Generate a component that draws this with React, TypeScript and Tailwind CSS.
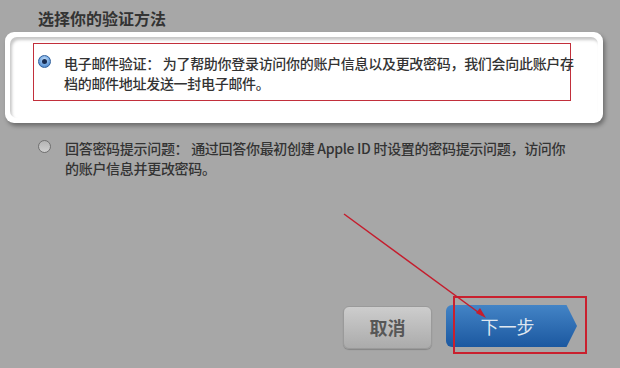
import React from 'react';

const SelectedRadio: React.FC = () => (
  <span className="mt-[2px] flex h-[13px] w-[13px] shrink-0 items-center justify-center rounded-full border border-[#2f5f9c] bg-[radial-gradient(circle_at_50%_35%,#cfe3f8_0%,#7fb0e6_45%,#3a76c0_100%)]">
    <span className="h-[5px] w-[5px] rounded-full bg-[#172c52]" />
  </span>
);

const EmptyRadio: React.FC = () => (
  <span className="mt-[2px] h-[13px] w-[13px] shrink-0 rounded-full border-[1.5px] border-[#707070] bg-gradient-to-b from-[#b4b4b4] to-[#cfcfcf]" />
);

const App: React.FC = () => {
  return (
    <div
      className="relative flex h-[368px] w-[620px] flex-col overflow-hidden bg-[#a7a7a7] text-[#2f2f2f]"
      style={{ fontFamily: '"Noto Sans CJK SC", "Liberation Sans", sans-serif' }}
    >
      <h1 className="pl-[38px] pt-[8px] text-[16px] font-bold leading-[20px] text-[#333]">
        选择你的验证方法
      </h1>

      {/* highlighted option */}
      <div className="ml-[5px] mt-[4px] h-[91px] w-[598px] rounded-[9px] bg-white p-[5px] shadow-[2px_3px_4px_rgba(0,0,0,0.35)]">
        <div className="h-full rounded-[7px] pl-[23px] pt-[6px] shadow-[inset_2px_3px_3px_rgba(0,0,0,0.22)]">
          <div className="flex h-[58px] w-[538px] items-start border-[1.5px] border-[#c22f3b] pl-[4px] pt-[9px]">
            <SelectedRadio />
            <p className="ml-[13px] whitespace-nowrap text-[14px] font-medium leading-[20px] tracking-[-0.3px] text-[#333]">
              电子邮件验证： 为了帮助你登录访问你的账户信息以及更改密码，我们会向此账户存
              <br />
              档的邮件地址发送一封电子邮件。
            </p>
          </div>
        </div>
      </div>

      <div className="flex items-start pl-[38px] pt-[15px]">
        <EmptyRadio />
        <p className="ml-[14px] whitespace-nowrap text-[14px] font-medium leading-[20px] tracking-[-0.3px] text-[#333]">
          回答密码提示问题： 通过回答你最初创建 Apple ID 时设置的密码提示问题，访问你
          <br />
          的账户信息并更改密码。
        </p>
      </div>

      <div className="mt-auto flex items-start justify-end gap-[14px] pb-[19px] pr-[43px]">
        <button className="mt-[1px] flex h-[43px] w-[89px] items-center justify-center rounded-[6px] border border-[#9a9a9a] bg-gradient-to-b from-[#cdcdcd] to-[#ababab] text-[18px] font-bold text-[#575757] shadow-[0_1px_1px_rgba(0,0,0,0.2)]">
          取消
        </button>
        <button className="flex h-[42px] w-[131px] items-center justify-center rounded-[6px] bg-gradient-to-b from-[#4384c6] to-[#1b58a0] pr-[8px] text-[18px] text-[#dfe7f0] [clip-path:polygon(0_0,92%_0,100%_50%,92%_100%,0_100%)]">
          下一步
        </button>
      </div>

      {/* annotations */}
      <div className="absolute left-[453px] top-[296px] h-[58px] w-[134px] border-2 border-[#c9202e]" />
      <svg className="pointer-events-none absolute left-0 top-0" width="620" height="368">
        <line x1="344" y1="214" x2="482" y2="315" stroke="#c51d2d" strokeWidth="1.5" />
        <polygon points="486,318 476,313 480,308" fill="#c51d2d" />
      </svg>
    </div>
  );
};

export default App;
